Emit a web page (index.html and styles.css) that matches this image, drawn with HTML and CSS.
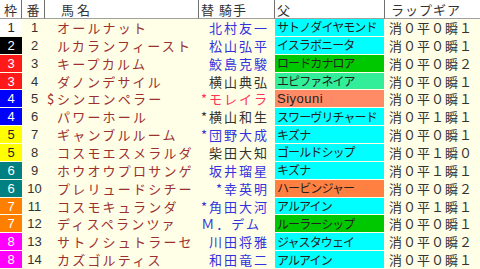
FILE: index.html
```html
<!DOCTYPE html>
<html lang="ja">
<head>
<meta charset="utf-8">
<link rel="stylesheet" href="styles.css">
</head>
<body>
<div class="table">
  <div class="row head">
    <div class="h c">枠</div>
    <div class="h c">番</div>
    <div class="h name-h">馬名</div>
    <div class="h jockey-h">替&nbsp;騎手</div>
    <div class="h sire-h">父</div>
    <div class="h lap-h">ラップギア</div>
  </div>

  <div class="row"><div class="waku w1">1</div><div class="num">1</div><div class="name"><span class="mk"></span>オールナット</div><div class="jockey blue">北村友一</div><div class="sire cyan">サトノダイヤモンド</div><div class="lap">消０平０瞬１</div></div>
  <div class="row"><div class="waku w2">2</div><div class="num">2</div><div class="name"><span class="mk"></span>ルカランフィースト</div><div class="jockey blue">松山弘平</div><div class="sire cyan">イスラボニータ</div><div class="lap">消０平０瞬１</div></div>
  <div class="row"><div class="waku w3">3</div><div class="num">3</div><div class="name"><span class="mk"></span>キープカルム</div><div class="jockey blue">鮫島克駿</div><div class="sire green">ロードカナロア</div><div class="lap">消０平０瞬２</div></div>
  <div class="row"><div class="waku w3">3</div><div class="num">4</div><div class="name"><span class="mk"></span>ダノンデサイル</div><div class="jockey black">横山典弘</div><div class="sire mint">エピファネイア</div><div class="lap">消０平０瞬１</div></div>
  <div class="row"><div class="waku w4">4</div><div class="num">5</div><div class="name"><span class="mk">$</span>シンエンペラー</div><div class="jockey red">*モレイラ</div><div class="sire salmon latin">Siyouni</div><div class="lap">消０平０瞬１</div></div>
  <div class="row"><div class="waku w4">4</div><div class="num">6</div><div class="name"><span class="mk"></span>パワーホール</div><div class="jockey black">*横山和生</div><div class="sire cyan">スワーヴリチャード</div><div class="lap">消０平１瞬１</div></div>
  <div class="row"><div class="waku w5">5</div><div class="num">7</div><div class="name"><span class="mk"></span>ギャンブルルーム</div><div class="jockey blue">*団野大成</div><div class="sire cyan">キズナ</div><div class="lap">消０平０瞬１</div></div>
  <div class="row"><div class="waku w5">5</div><div class="num">8</div><div class="name"><span class="mk"></span>コスモエスメラルダ</div><div class="jockey black">柴田大知</div><div class="sire cyan">ゴールドシップ</div><div class="lap">消０平１瞬０</div></div>
  <div class="row"><div class="waku w6">6</div><div class="num">9</div><div class="name"><span class="mk"></span>ホウオウプロサンゲ</div><div class="jockey blue">坂井瑠星</div><div class="sire cyan">キズナ</div><div class="lap">消０平１瞬１</div></div>
  <div class="row"><div class="waku w6">6</div><div class="num">10</div><div class="name"><span class="mk"></span>プレリュードシチー</div><div class="jockey blue">*幸英明</div><div class="sire orange">ハービンジャー</div><div class="lap">消０平０瞬２</div></div>
  <div class="row"><div class="waku w7">7</div><div class="num">11</div><div class="name"><span class="mk"></span>コスモキュランダ</div><div class="jockey blue">*角田大河</div><div class="sire cyan">アルアイン</div><div class="lap">消０平１瞬１</div></div>
  <div class="row"><div class="waku w7">7</div><div class="num">12</div><div class="name"><span class="mk"></span>ディスペランツァ</div><div class="jockey blue pad">Ｍ．デム</div><div class="sire green">ルーラーシップ</div><div class="lap">消０平０瞬１</div></div>
  <div class="row"><div class="waku w8">8</div><div class="num">13</div><div class="name"><span class="mk"></span>サトノシュトラーセ</div><div class="jockey blue">川田将雅</div><div class="sire cyan">ジャスタウェイ</div><div class="lap">消０平０瞬２</div></div>
  <div class="row"><div class="waku w8">8</div><div class="num">14</div><div class="name"><span class="mk"></span>カズゴルティス</div><div class="jockey blue">和田竜二</div><div class="sire cyan">アルアイン</div><div class="lap">消０平０瞬１</div></div>
</div>
</body>
</html>
```

FILE: styles.css
```css
html, body {
  margin: 0;
  padding: 0;
  background: #fffee6;
}
body {
  width: 480px;
  height: 269px;
  overflow: hidden;
  font-family: "Noto Sans CJK JP", "Noto Sans", sans-serif;
  font-size: 13px;
  color: #222;
}
.table {
  display: flex;
  flex-direction: column;
  height: 269px;
}
.row {
  display: grid;
  grid-template-columns: 22px 23px 154px 76px 110px 95px;
  flex: 1 1 0;
  min-height: 0;
}
.row > div {
  display: flex;
  align-items: center;
  border-bottom: 1px solid #fffee6;
  overflow: hidden;
  white-space: nowrap;
  line-height: 1;
}
.head {
  flex: 0 0 19px;
  background: #fff;
}
.head > .h {
  border-bottom: 1px solid #a0a0a0;
  border-right: 1px solid #707070;
  color: #333;
  font-size: 13px;
}
.head > .h:last-child {
  border-right: none;
}
.c {
  justify-content: center;
}
.name-h {
  padding-left: 16px;
  letter-spacing: 3px;
}
.jockey-h {
  padding-left: 2px;
  letter-spacing: 1px;
}
.sire-h {
  padding-left: 2px;
}
.lap-h {
  padding-left: 6px;
  font-size: 11px;
  color: #555;
  letter-spacing: 1px;
}
.waku {
  justify-content: center;
  color: #fff;
  font-family: "Liberation Sans", sans-serif;
  font-size: 13px;
}
.w1 { background: #ffffff; color: #222; }
.w2 { background: #000000; }
.w3 { background: #ff1a1a; }
.w4 { background: #0000ff; }
.w5 { background: #ffff00; color: #222; }
.w6 { background: #008080; }
.w7 { background: #ff8000; }
.w8 { background: #ff00ff; }
.num {
  justify-content: center;
  font-family: "Liberation Sans", sans-serif;
  color: #333;
  padding-left: 2px;
}
.name {
  color: #9a3030;
  letter-spacing: 2.2px;
  padding-left: 2px;
}
.mk {
  display: inline-block;
  width: 10px;
  letter-spacing: 0;
}
.jockey {
  justify-content: flex-end;
  padding-right: 6px;
  letter-spacing: 2px;
}
.jockey.pad { padding-right: 14px; }
.blue { color: #3333dd; }
.black { color: #333; }
.red { color: #ff3355; }
.sire {
  padding-left: 2px;
  color: #222;
  font-size: 12px;
  letter-spacing: -0.9px;
  margin-right: 1px;
}
.sire.latin {
  font-family: "Liberation Sans", sans-serif;
  font-size: 13px;
  letter-spacing: 0.5px;
}
.cyan { background: #00ffff; }
.green { background: #00c800; }
.mint { background: #33ee99; }
.salmon { background: #ff8a66; }
.orange { background: #ff8040; }
.lap {
  padding-left: 4px;
  color: #333;
  letter-spacing: 1px;
}
```
